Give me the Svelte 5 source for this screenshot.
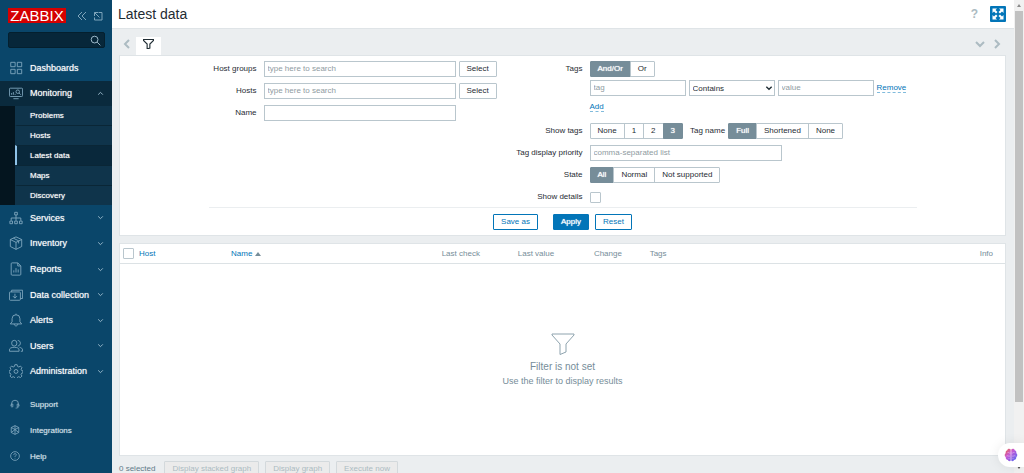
<script lang="ts">
  type Segment = { label: string; options: string[]; value: string };

  const submenu = ['Problems', 'Hosts', 'Latest data', 'Maps', 'Discovery'];
  const menu = [
    { label: 'Dashboards', icon: 'dashboards', expandable: false },
    { label: 'Monitoring', icon: 'monitoring', expandable: true },
    { label: 'Services', icon: 'services', expandable: true },
    { label: 'Inventory', icon: 'inventory', expandable: true },
    { label: 'Reports', icon: 'reports', expandable: true },
    { label: 'Data collection', icon: 'collection', expandable: true },
    { label: 'Alerts', icon: 'alerts', expandable: true },
    { label: 'Users', icon: 'users', expandable: true },
    { label: 'Administration', icon: 'administration', expandable: true }
  ];
  const secondary = [
    { label: 'Support', icon: 'support' },
    { label: 'Integrations', icon: 'integrations' },
    { label: 'Help', icon: 'help' }
  ];

  // Icon strokes on a 16x16 grid
  const icons: Record<string, string> = {
    dashboards: 'M2 1.5h5v5h-5zM9.5 1.5h5v5h-5zM2 9.500h5v5h-5zM9.5 9.500h5v5h-5z',
    monitoring:
      'M1.5 2.5h13a1 1 0 0 1 1 1v7.5a1 1 0 0 1-1 1h-13a1 1 0 0 1-1-1v-7.5a1 1 0 0 1 1-1zM5 14.5h6M3 10v-2M5 10v-3M7 10v-1M8 6.5a2 2 0 1 0 4 0a2 2 0 1 0-4 0M11.5 8l2 2',
    services:
      'M6.5 1.5h3v3h-3zM8 4.5v6.5M2.5 11v-3h11v3M1 11.5h3v3h-3zM6.5 11.5h3v3h-3zM12 11.5h3v3h-3z',
    inventory: 'M8 1l6.5 3v8l-6.5 3.3-6.5-3.300v-8zM1.5 4l6.5 3.300 6.500-3.300M8 7.300v8M5 2.500l6 3v3',
    reports:
      'M3.5 1h6.5l3.5 3.5v9.5a1 1 0 0 1-1 1h-9a1 1 0 0 1-1-1v-12a1 1 0 0 1 1-1zM10 1v3.5h3.5M5.5 12v-2.5M8 12v-5M10.5 12v-3.5',
    collection:
      'M1.5 4.5h10.5a1 1 0 0 1 1 1v7.5a1 1 0 0 1-1 1h-10.5a1 1 0 0 1-1-1v-7.5a1 1 0 0 1 1-1zM3 4.5v-2h12.5v9.5h-2.5M6.8 6.5v5M4.5 9.3l2.3 2.3 2.3-2.3',
    alerts: 'M1.5 12.5h13l-2-2.500v-3.500a4.5 4.500 0 0 0-9 0v3.500zM6 12.5c0 3 4 3 4 0M8 2v-1.200',
    users:
      'M3 4.8a3 3.3 0 1 0 6 0a3 3.3 0 1 0-6 0M.5 14v-1.5c0-2 2-3 5.5-3s5.5 1 5.5 3v1.5zM10 1.7c4 0 4 6 0 6.3M12 9.5c2 .5 3.5 1.3 3.5 3v1.5h-2',
    administration:
      'M6.700 .8h2.600l.5 2 1.400.600 1.900-1 1.700 1.800-1 1.800.600 1.400 1.600.500v2.200l-1.600.500-.6 1.400 1 1.800-1.700 1.700-1.900-1-1.400.600-.5 1.700h-2.600l-.5-1.700-1.400-.6-1.900 1-1.700-1.700 1-1.800-.6-1.400-1.600-.5v-2.200l1.600-.5.6-1.400-1-1.800 1.700-1.800 1.900 1 1.400-.6zM5.800 8.500a2.200 2.200 0 1 0 4.400 0a2.200 2.200 0 1 0-4.400 0',
    support:
      'M2.5 11v-3.5a5.5 5.5 0 0 1 11 0v3.5M2.5 8h2v4.5h-2c-1.5 0-1.5-4.5 0-4.5M13.5 8h-2v4.5h2c1.5 0 1.5-4.5 0-4.5M13 12.5c0 1.5-1.5 2-4 2',
    integrations:
      'M8 1l6 3v8l-6 3-6-3v-8zM2 4l6 3.300 6-3.300M8 7.300v7.700M2 12l6-4.700 6 4.700M8 1v6.300',
    help: 'M1 8a7 7 0 1 0 14 0a7 7 0 1 0-14 0M6 6.5c0-3 4-3 4-.5 0 1.5-2 1.5-2 3.5M8 11v1'
  };

  let filter = $state({ name: '', tag: '', operator: 'Contains', value: '', priority: '', details: false });

  let segments = $state<Record<string, Segment>>({
    evaltype: { label: 'Tags', options: ['And/Or', 'Or'], value: 'And/Or' },
    show_tags: { label: 'Show tags', options: ['None', '1', '2', '3'], value: '3' },
    tag_name: { label: 'Tag name', options: ['Full', 'Shortened', 'None'], value: 'Full' },
    state: { label: 'State', options: ['All', 'Normal', 'Not supported'], value: 'All' }
  });
</script>

{#snippet icon(name: string)}
  <svg class="icon" viewBox="0 0 16 16" aria-hidden="true"><path d={icons[name]} /></svg>
{/snippet}

{#snippet segmented(key: string)}
  <div class="segmented" role="radiogroup" aria-label={segments[key].label}>
    {#each segments[key].options as option}
      <label>
        <input
          type="radio"
          name={key}
          value={option}
          checked={segments[key].value === option}
          onchange={() => (segments[key].value = option)}
        />
        <span>{option}</span>
      </label>
    {/each}
  </div>
{/snippet}

<div class="wrapper">
  <aside class="sidebar">
    <div class="sidebar-header">
      <a class="logo" href="#home">ZABBIX</a>
      <button class="side-btn" aria-label="Collapse sidebar">
        <svg viewBox="0 0 10 10"><path d="M5 1L1 5l4 4M9 1L5 5l4 4" /></svg>
      </button>
      <button class="side-btn" aria-label="Hide sidebar">
        <svg viewBox="0 0 10 10"><path d="M5.5 1.5h3.500v7.500h-7.500v-2.500M6.5 6.500L1.500 1.500M1.500 5v-3.500h3.500" /></svg>
      </button>
    </div>
    <form class="search" role="search">
      <input type="text" aria-label="Search" />
      <button type="button" aria-label="Search">
        <svg viewBox="0 0 12 12"><circle cx="5" cy="5" r="3.7" /><path d="M7.8 7.8l3.5 3.5" /></svg>
      </button>
    </form>

    <nav class="menu">
      {#each menu as item}
        <a class="menu-item" class:open={item.label === 'Monitoring'} href="#{item.icon}">
          {@render icon(item.icon)}
          <span>{item.label}</span>
          {#if item.expandable}
            <svg class="arrow" viewBox="0 0 6 6"><path d="M1 2l2 2 2-2" /></svg>
          {/if}
        </a>
        {#if item.label === 'Monitoring'}
          <div class="submenu">
            {#each submenu as sub}
              <a class:selected={sub === 'Latest data'} href="#{sub}">{sub}</a>
            {/each}
          </div>
        {/if}
      {/each}
    </nav>

    <nav class="secondary">
      {#each secondary as item}
        <a href="#{item.icon}">
          {@render icon(item.icon)}
          <span>{item.label}</span>
        </a>
      {/each}
    </nav>
  </aside>

  <main>
    <header>
      <h1>Latest data</h1>
      <a class="help" href="#docs" aria-label="Help">?</a>
      <button class="kiosk" aria-label="Kiosk mode">
        <svg viewBox="0 0 16 16">
          <path d="M2.500 7V2.500H7L5.500 4 7.500 6 6 7.500 4 5.500zM13.500 7V2.500H9L10.500 4 8.500 6 10 7.500l2-2zM2.500 9v4.500H7L5.500 12l2-2L6 8.500l-2 2zM13.500 9v4.500H9l1.500-1.500-2-2L10 8.500l2 2z" />
        </svg>
      </button>
    </header>

    <div class="content">
      <div class="tabs">
        <button class="tab-nav" aria-label="Previous tab">
          <svg viewBox="0 0 10 10"><path d="M7 1L3 5l4 4" /></svg>
        </button>
        <button class="tab" aria-label="Filter">
          <svg viewBox="0 0 24 22"><path d="M1 1h22v2l-8 8v9l-6 2V11L1 3z" /></svg>
        </button>
        <button class="tab-nav tab-list" aria-label="All tabs">
          <svg viewBox="0 0 10 10"><path d="M1 3l4 4 4-4" /></svg>
        </button>
        <button class="tab-nav" aria-label="Next tab">
          <svg viewBox="0 0 10 10"><path d="M3 1l4 4-4 4" /></svg>
        </button>
      </div>

      <form class="filter">
        <div class="filter-body">
          <div class="fields groups">
            <label for="groups">Host groups</label>
            <div class="row">
              <input id="groups" class="wide" type="text" placeholder="type here to search" />
              <button type="button" class="grey">Select</button>
            </div>
            <label for="hosts">Hosts</label>
            <div class="row">
              <input id="hosts" class="wide" type="text" placeholder="type here to search" />
              <button type="button" class="grey">Select</button>
            </div>
            <label for="name">Name</label>
            <div class="row"><input id="name" class="wide" type="text" bind:value={filter.name} /></div>
          </div>

          <div class="fields tags">
            <span class="label">Tags</span>
            <div class="tag-block">
              {@render segmented('evaltype')}
              <div class="row">
                <input class="short" type="text" placeholder="tag" aria-label="Tag" bind:value={filter.tag} />
                <div class="select">
                  <select aria-label="Operator" bind:value={filter.operator}>
                    <option>Contains</option>
                    <option>Equals</option>
                    <option>Exists</option>
                  </select>
                  <svg viewBox="0 0 6 6"><path d="M1 2l2 2 2-2" /></svg>
                </div>
                <input class="short" type="text" placeholder="value" aria-label="Value" bind:value={filter.value} />
                <button type="button" class="link">Remove</button>
              </div>
              <div class="row"><button type="button" class="link">Add</button></div>
            </div>

            <span class="label">Show tags</span>
            <div class="row">
              {@render segmented('show_tags')}
              <span class="inline-label">Tag name</span>
              {@render segmented('tag_name')}
            </div>

            <label for="priority">Tag display priority</label>
            <div class="row">
              <input id="priority" class="wide" type="text" placeholder="comma-separated list" bind:value={filter.priority} />
            </div>

            <span class="label">State</span>
            <div class="row">{@render segmented('state')}</div>

            <label for="details">Show details</label>
            <div class="row"><input id="details" type="checkbox" bind:checked={filter.details} /></div>
          </div>
        </div>
        <div class="filter-buttons">
          <button type="button" class="alt save">Save as</button>
          <button type="button" class="primary">Apply</button>
          <button type="button" class="alt">Reset</button>
        </div>
      </form>

      <section class="results">
        <table>
          <thead>
            <tr>
              <th class="check"><input type="checkbox" aria-label="Select all" /></th>
              <th class="host"><a href="#host">Host</a></th>
              <th class="name"><a href="#name">Name <i></i></a></th>
              <th class="last">Last check</th>
              <th class="last">Last value</th>
              <th class="change">Change</th>
              <th>Tags</th>
              <th class="info">Info</th>
            </tr>
          </thead>
        </table>
        <div class="no-data">
          <svg viewBox="0 0 24 22"><path d="M1 1h22v1l-8 9v8l-6 2.5V11L1 2z" /></svg>
          <strong>Filter is not set</strong>
          <span>Use the filter to display results</span>
        </div>
      </section>

      <div class="actions">
        <span>0 selected</span>
        <button disabled>Display stacked graph</button>
        <button disabled>Display graph</button>
        <button disabled>Execute now</button>
      </div>
    </div>
  </main>

  <div class="scrollbar" aria-hidden="true">
    <i class="up"></i>
    <div class="thumb"></div>
    <i class="down"></i>
  </div>

  <button class="assistant" aria-label="Assistant">
    <svg viewBox="0 0 14 14">
      <defs>
        <linearGradient id="brain" x1="0" y1="0" x2="1" y2="1">
          <stop offset="0" stop-color="#f0663c" />
          <stop offset=".4" stop-color="#c659d6" />
          <stop offset="1" stop-color="#4b6df5" />
        </linearGradient>
      </defs>
      <path
        fill="url(#brain)"
        d="M6.700 1.500C5.500.2 3.500.8 3.300 2.200 1.800 2.500 1.300 4 1.800 5 .3 6 .4 8.200 1.700 9c-.2 2 1 3 2.300 3 .5 1.500 2.300 1.500 2.700.5zM7.300 1.500C8.500.2 10.500.8 10.700 2.200c1.500.3 2 1.800 1.500 2.800 1.500 1 1.400 3.200.1 4 .2 2-1 3-2.300 3-.5 1.500-2.300 1.500-2.700.5z"
      />
      <path
        class="folds"
        d="M3.500 4.500c1.500-.5 1.500 1 3 .5M2.500 8c1.500-.8 2 .8 3.500 0M10.500 4.500c-1.500-.5-1.500 1-3 .5M11.500 8c-1.500-.8-2 .8-3.500 0M4.500 10.500h1M8.500 10.500h1"
      />
    </svg>
  </button>
</div>

<style>
  :global(body) {
    font-family: "Liberation Sans", Arial, sans-serif;
    font-size: 8px;
    color: #1f2c33;
    background: #ebeef0;
  }

  * {
    box-sizing: border-box;
  }

  button,
  input,
  select {
    font: inherit;
    color: inherit;
    margin: 0;
  }

  a {
    text-decoration: none;
  }

  svg {
    display: block;
    fill: none;
    stroke: currentColor;
  }

  .wrapper {
    display: flex;
    height: 100vh;
    overflow: hidden;
  }

  /* Sidebar */
  .sidebar {
    flex: 0 0 112px;
    min-width: 0;
    display: flex;
    flex-direction: column;
    background: #0a466a;
    color: #fff;
  }

  .sidebar-header {
    display: flex;
    align-items: center;
    gap: 6px;
    padding: 8px 8px 0;
  }

  .logo {
    width: 58px;
    background: #d40000;
    color: #fff;
    font-size: 15px;
    line-height: 15px;
    text-align: center;
    margin-right: 5px;
  }

  .side-btn {
    border: 0;
    padding: 0;
    background: none;
    color: #7fa5bb;
  }

  .side-btn svg {
    width: 10px;
    height: 10px;
  }

  .search {
    display: flex;
    align-items: center;
    margin: 9px 7px 7px 8px;
    height: 16px;
    background: #07273a;
    border: 1px solid #04202f;
    border-radius: 2px;
  }

  .search input {
    flex: 1;
    width: 0;
    min-width: 0;
    height: 14px;
    padding: 0 4px;
    border: 0;
    background: none;
  }

  .search button {
    border: 0;
    padding: 0 3px;
    background: none;
    color: #a9c4d4;
  }

  .search svg {
    width: 11px;
    height: 11px;
  }

  .menu {
    flex: 1 1 auto;
    display: flex;
    flex-direction: column;
    min-height: 0;
  }

  .menu-item {
    flex: 0 1 26px;
    display: flex;
    align-items: center;
    gap: 7px;
    padding: 0 8px 0 9px;
    color: #fff;
    font-size: 9px;
    white-space: nowrap;
    text-shadow: 0 0 1px rgba(255, 255, 255, 0.7);
  }

  .menu-item.open {
    background: #0a2a3d;
  }

  .icon {
    flex: none;
    width: 14px;
    height: 14px;
    color: #82a9c0;
  }

  .arrow {
    width: 7px;
    height: 7px;
    margin-left: auto;
    color: #9dbccd;
    stroke-width: 0.8;
  }

  .menu-item.open .arrow {
    transform: rotate(180deg);
  }

  .submenu {
    flex: none;
    border-left: 15px solid #04151f;
    background: #0f344b;
  }

  .submenu a {
    display: block;
    padding-left: 13px;
    border-left: 2px solid transparent;
    color: #fff;
    line-height: 19px;
    text-shadow: 0 0 1px rgba(255, 255, 255, 0.7);
  }

  .submenu a + a {
    border-top: 1px solid #0a2636;
  }

  .submenu a.selected {
    background: #09283b;
    border-left-color: #8fc3e8;
  }

  .secondary {
    padding: 7px 0 4px;
  }

  .secondary a {
    display: flex;
    align-items: center;
    gap: 10px;
    height: 26px;
    padding-left: 10px;
    color: #d5e2ea;
    text-shadow: 0 0 1px rgba(213, 226, 234, 0.6);
  }

  .secondary .icon {
    width: 10px;
    height: 10px;
    stroke-width: 1.3;
  }

  /* Page */
  main {
    flex: 1;
    min-width: 0;
  }

  header {
    display: flex;
    align-items: center;
    height: 29px;
    padding: 0 8px 0 6px;
    background: #fff;
    border-bottom: 1px solid #dfe4e7;
  }

  h1 {
    flex: 1;
    margin: 0;
    font-size: 14px;
    font-weight: normal;
  }

  .help {
    margin-right: 12px;
    color: #acbbc2;
    font-size: 12px;
    font-weight: bold;
  }

  .kiosk {
    width: 16px;
    height: 16px;
    padding: 0;
    border: 0;
    border-radius: 1px;
    background: #0275b8;
  }

  .kiosk svg {
    fill: #fff;
    stroke: none;
  }

  .content {
    padding: 8px 8px 0 7px;
  }

  .tabs {
    display: flex;
    height: 18px;
  }

  .tab-nav {
    width: 17px;
    height: 14px;
    padding: 0 3px;
    border: 0;
    background: none;
    color: #acbbc2;
  }

  .tab-nav svg {
    width: 10px;
    height: 10px;
    stroke-width: 2;
  }

  .tab-list {
    margin-left: auto;
  }

  .tab {
    width: 25px;
    padding: 0 7px 4px;
    border: 0;
    background: #fff;
  }

  .tab svg {
    width: 11px;
    height: 10px;
    stroke-width: 2.5;
  }

  .filter,
  .results {
    background: #fff;
    border: 1px solid #dfe4e7;
  }

  .filter {
    padding: 5px 10px;
  }

  .filter-body {
    display: grid;
    grid-template-columns: 304px 1fr;
    align-items: start;
    max-width: 708px;
    margin: 0 auto;
    padding-bottom: 2px;
    border-bottom: 1px solid #ebeef0;
  }

  .fields {
    display: grid;
    gap: 6px 7px;
    line-height: 16px;
  }

  .groups {
    grid-template-columns: 48px 1fr;
  }

  .tags {
    grid-template-columns: 70px 1fr;
  }

  .fields > label,
  .label {
    text-align: right;
    white-space: nowrap;
  }

  .row {
    display: flex;
    align-items: center;
    gap: 3px;
    height: 16px;
  }

  .tag-block {
    display: grid;
    gap: 3px;
    padding-bottom: 2px;
  }

  input[type='text'].wide,
  input[type='text'].short,
  select {
    height: 16px;
    padding: 0 3px;
    border: 1px solid #b9c6cd;
    border-radius: 0;
    background: #fff;
  }

  .wide {
    width: 192px;
  }

  .short {
    width: 96px;
  }

  input::placeholder {
    color: #8f9ba1;
  }

  .select {
    position: relative;
    width: 86px;
  }

  .select select {
    display: block;
    width: 100%;
    appearance: none;
  }

  .select svg {
    position: absolute;
    top: 4px;
    right: 2px;
    width: 8px;
    height: 8px;
    pointer-events: none;
  }

  input[type='checkbox'] {
    display: block;
    appearance: none;
    width: 11px;
    height: 11px;
    border: 1px solid #b9c6cd;
    border-radius: 1px;
    background: #fff;
  }

  input[type='checkbox']:checked {
    background: #0275b8;
  }

  .grey,
  .alt,
  .primary,
  .actions button {
    height: 16px;
    padding: 0 7px;
    border: 1px solid #b9c6cd;
    border-radius: 1px;
    background: #fff;
    line-height: 14px;
    white-space: nowrap;
  }

  .alt {
    border-color: #0275b8;
    color: #0275b8;
  }

  .primary {
    border-color: #0275b8;
    background: #0275b8;
    color: #fff;
    text-shadow: 0 0 1px #fff;
  }

  .link {
    padding: 0;
    border: 0;
    border-bottom: 1px dashed #81bbdc;
    background: none;
    color: #0275b8;
    line-height: 9px;
  }

  .segmented {
    display: flex;
    height: 16px;
  }

  .segmented label {
    position: relative;
  }

  .segmented label + label {
    margin-left: -1px;
  }

  .segmented input {
    position: absolute;
    opacity: 0;
    inset: 0;
  }

  .segmented span {
    display: block;
    padding: 0 7px;
    border: 1px solid #b9c6cd;
    line-height: 14px;
    white-space: nowrap;
  }

  .segmented label:first-child span {
    border-radius: 1px 0 0 1px;
  }

  .segmented label:last-child span {
    border-radius: 0 1px 1px 0;
  }

  .segmented input:checked + span {
    background: #768d99;
    border-color: #768d99;
    color: #fff;
    text-shadow: 0 0 1px #fff;
  }

  .inline-label {
    padding-left: 4px;
  }

  .filter-buttons {
    display: flex;
    justify-content: center;
    gap: 6px;
    padding-top: 6px;
  }

  .save {
    margin-right: 9px;
  }

  /* Results */
  .results {
    margin-top: 7px;
  }

  table {
    width: 100%;
    table-layout: fixed;
    border-collapse: collapse;
  }

  th {
    height: 19px;
    padding: 0 3px;
    border-bottom: 1px solid #dce2e5;
    color: #768d99;
    font-weight: normal;
    text-align: left;
    white-space: nowrap;
  }

  th a {
    color: #0275b8;
  }

  th i {
    display: inline-block;
    border: 3px solid transparent;
    border-top: 0;
    border-bottom: 4px solid #768d99;
  }

  .check {
    width: 16px;
  }

  .host {
    width: 10.4%;
  }

  .name {
    width: 23.8%;
  }

  .last {
    width: 8.6%;
  }

  .change {
    width: 6.3%;
  }

  .info {
    width: 3.2%;
  }

  .no-data {
    display: flex;
    flex-direction: column;
    align-items: center;
    padding: 69px 0 67px;
    color: #768d99;
    font-size: 9px;
    line-height: 14px;
  }

  .no-data svg {
    width: 24px;
    height: 22px;
    margin-bottom: 5px;
    color: #8ea3ae;
  }

  .no-data strong {
    font-size: 10px;
    font-weight: normal;
  }

  .actions {
    display: flex;
    align-items: center;
    gap: 6px;
    padding: 5px 0;
  }

  .actions span {
    margin-right: 3px;
    color: #5f7a88;
  }

  .actions button {
    border-color: #d3d9dc;
    background: #ebebeb;
    color: #acbbc2;
  }

  /* Window scrollbar */
  .scrollbar {
    flex: 0 0 10px;
    display: flex;
    flex-direction: column;
    align-items: center;
    padding: 4px 0;
    background: #f1f1f1;
  }

  .scrollbar i {
    border: 2px solid transparent;
  }

  .scrollbar .up {
    border-top: 0;
    border-bottom: 3px solid #8b8b8b;
  }

  .scrollbar .down {
    margin-top: auto;
    border-bottom: 0;
    border-top: 3px solid #505050;
  }

  .thumb {
    width: 8px;
    height: 84%;
    margin-top: 4px;
    background: #c1c1c1;
  }

  .assistant {
    position: fixed;
    right: 0;
    bottom: 6px;
    width: 26px;
    height: 24px;
    padding: 0 6px;
    border: 0;
    border-radius: 12px 0 0 12px;
    background: #fff;
    box-shadow: 0 0 12px rgba(0, 0, 0, 0.08);
  }

  .assistant svg {
    width: 14px;
    height: 14px;
    stroke: none;
  }

  .assistant .folds {
    stroke: #fff;
    stroke-opacity: 0.6;
    stroke-width: 0.6;
  }
</style>
